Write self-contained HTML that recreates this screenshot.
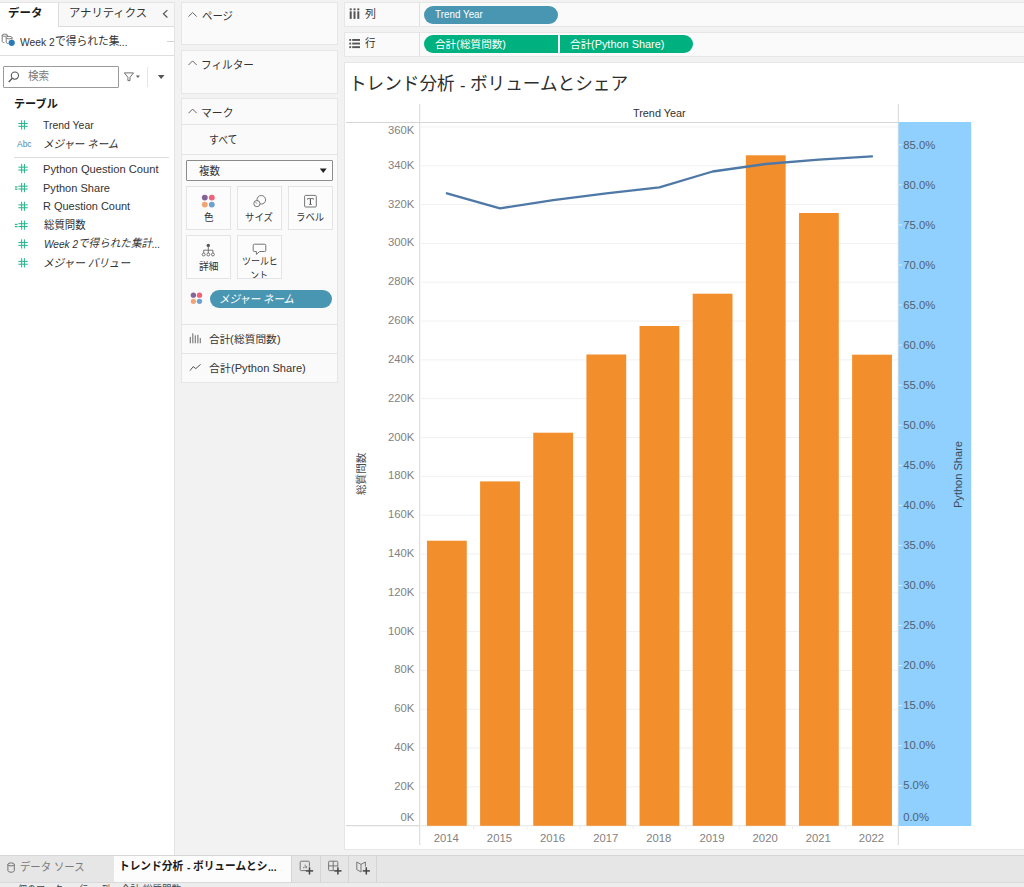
<!DOCTYPE html>
<html lang="ja"><head><meta charset="utf-8"><title>Tableau - トレンド分析</title>
<style>
html,body{margin:0;padding:0;}
body{width:1024px;height:887px;overflow:hidden;position:relative;background:#f2f2f2;font-family:"Liberation Sans","Noto Sans CJK JP",sans-serif;}
.a{position:absolute;}
.t{position:absolute;white-space:pre;}
</style></head><body>
<div class="a" style="left:0px;top:3px;width:174px;height:852px;background:#ffffff;"></div>
<div class="a" style="left:0px;top:2px;width:175px;height:1px;background:#e4e4e4;"></div>
<div class="a" style="left:174px;top:2px;width:1px;height:853px;background:#e4e4e4;"></div>
<div class="a" style="left:59px;top:3px;width:115px;height:23px;background:#f8f8f8;"></div>
<div class="a" style="left:58px;top:3px;width:1px;height:24px;background:#dcdcdc;"></div>
<div class="a" style="left:58px;top:26px;width:116px;height:1px;background:#dcdcdc;"></div>
<div class="a" style="left:0px;top:55px;width:174px;height:1px;background:#dedede;"></div>
<div class="a" style="left:166.5px;top:41px;width:7.5px;height:1px;background:#d0d0d0;"></div>
<div class="a" style="left:3px;top:66px;width:116px;height:22px;background:#fff;border:1px solid #9a9a9a;box-sizing:border-box;border-radius:1px;"></div>
<div class="a" style="left:147px;top:67px;width:1px;height:20px;background:#e6e6e6;"></div>
<div class="a" style="left:14px;top:157px;width:155px;height:1px;background:#dddddd;"></div>
<div class="a" style="left:181px;top:2px;width:157px;height:43px;background:#fafafa;border:1px solid #e6e6e6;box-sizing:border-box;"></div>
<div class="a" style="left:181px;top:50px;width:157px;height:44px;background:#fafafa;border:1px solid #e6e6e6;box-sizing:border-box;"></div>
<div class="a" style="left:181px;top:98px;width:157px;height:285px;background:#fafafa;border:1px solid #e6e6e6;box-sizing:border-box;"></div>
<div class="a" style="left:182px;top:124px;width:155px;height:1px;background:#e4e4e4;"></div>
<div class="a" style="left:182px;top:154px;width:155px;height:1px;background:#e4e4e4;"></div>
<div class="a" style="left:182px;top:324px;width:155px;height:1px;background:#e4e4e4;"></div>
<div class="a" style="left:182px;top:353px;width:155px;height:1px;background:#e4e4e4;"></div>
<div class="a" style="left:186px;top:160px;width:147px;height:21px;background:#fcfcfc;border:1px solid #8c8c8c;box-sizing:border-box;border-radius:1px;"></div>
<div class="a" style="left:186px;top:186px;width:44.5px;height:44px;background:#fcfcfc;border:1px solid #e4e4e4;box-sizing:border-box;"></div>
<div class="a" style="left:237px;top:186px;width:44.5px;height:44px;background:#fcfcfc;border:1px solid #e4e4e4;box-sizing:border-box;"></div>
<div class="a" style="left:288px;top:186px;width:44.5px;height:44px;background:#fcfcfc;border:1px solid #e4e4e4;box-sizing:border-box;"></div>
<div class="a" style="left:186px;top:235px;width:44.5px;height:44px;background:#fcfcfc;border:1px solid #e4e4e4;box-sizing:border-box;"></div>
<div class="a" style="left:237px;top:235px;width:44.5px;height:44px;background:#fcfcfc;border:1px solid #e4e4e4;box-sizing:border-box;"></div>
<div class="a" style="left:210px;top:290px;width:122px;height:17.5px;background:#4996b2;border-radius:9px;"></div>
<div class="a" style="left:344px;top:2px;width:700px;height:25px;background:#fafafa;border:1px solid #e6e6e6;box-sizing:border-box;"></div>
<div class="a" style="left:344px;top:32px;width:700px;height:25px;background:#fafafa;border:1px solid #e6e6e6;box-sizing:border-box;"></div>
<div class="a" style="left:419px;top:3px;width:1px;height:23px;background:#e0e0e0;"></div>
<div class="a" style="left:419px;top:33px;width:1px;height:23px;background:#e0e0e0;"></div>
<div class="a" style="left:424px;top:5.5px;width:134px;height:18px;background:#4996b2;border-radius:9px;"></div>
<div class="a" style="left:424px;top:35.2px;width:133.7px;height:18px;background:#00b180;border-radius:9px 0 0 9px;"></div>
<div class="a" style="left:560px;top:35.2px;width:133px;height:18px;background:#00b180;border-radius:0 9px 9px 0;"></div>
<div class="a" style="left:344px;top:62px;width:700px;height:788px;background:#fff;border:1px solid #e6e6e6;box-sizing:border-box;"></div>
<div class="a" style="left:0px;top:855px;width:1024px;height:28px;background:#e6e6e6;"></div>
<div class="a" style="left:0px;top:854.6px;width:1024px;height:1px;background:#d6d6d6;"></div>
<div class="a" style="left:113.5px;top:855.6px;width:177.5px;height:26.6px;background:#fcfcfc;"></div>
<div class="a" style="left:291px;top:856px;width:1px;height:26px;background:#d4d4d4;"></div>
<div class="a" style="left:319.6px;top:856px;width:1px;height:26px;background:#d4d4d4;"></div>
<div class="a" style="left:348px;top:856px;width:1px;height:26px;background:#d4d4d4;"></div>
<div class="a" style="left:376.3px;top:856px;width:1px;height:26px;background:#d4d4d4;"></div>
<div class="a" style="left:0px;top:882px;width:1024px;height:1px;background:#d9d9d9;"></div>
<div class="a" style="left:0px;top:883px;width:1024px;height:4px;background:#ededed;"></div>
<svg class="a" style="left:0;top:0" width="1024" height="887"><rect x="421.0" y="825.20" width="477.3" height="1" fill="#e6e6e6"/><rect x="421.0" y="786.38" width="477.3" height="1" fill="#f1f1f1"/><rect x="421.0" y="747.56" width="477.3" height="1" fill="#f1f1f1"/><rect x="421.0" y="708.74" width="477.3" height="1" fill="#f1f1f1"/><rect x="421.0" y="669.92" width="477.3" height="1" fill="#f1f1f1"/><rect x="421.0" y="631.10" width="477.3" height="1" fill="#f1f1f1"/><rect x="421.0" y="592.28" width="477.3" height="1" fill="#f1f1f1"/><rect x="421.0" y="553.46" width="477.3" height="1" fill="#f1f1f1"/><rect x="421.0" y="514.64" width="477.3" height="1" fill="#f1f1f1"/><rect x="421.0" y="475.82" width="477.3" height="1" fill="#f1f1f1"/><rect x="421.0" y="437.00" width="477.3" height="1" fill="#f1f1f1"/><rect x="421.0" y="398.18" width="477.3" height="1" fill="#f1f1f1"/><rect x="421.0" y="359.36" width="477.3" height="1" fill="#f1f1f1"/><rect x="421.0" y="320.54" width="477.3" height="1" fill="#f1f1f1"/><rect x="421.0" y="281.72" width="477.3" height="1" fill="#f1f1f1"/><rect x="421.0" y="242.90" width="477.3" height="1" fill="#f1f1f1"/><rect x="421.0" y="204.08" width="477.3" height="1" fill="#f1f1f1"/><rect x="421.0" y="165.26" width="477.3" height="1" fill="#f1f1f1"/><rect x="421.0" y="126.44" width="477.3" height="1" fill="#f1f1f1"/><rect x="346" y="122" width="552.3" height="1" fill="#d6d6d6"/><rect x="419.2" y="104" width="1" height="741" fill="#d6d6d6"/><rect x="346" y="825.2" width="74.0" height="1" fill="#d2d2d2"/><rect x="897.8" y="104" width="1" height="741" fill="#d6d6d6"/><rect x="898.5999999999999" y="122" width="72.6" height="704.0" fill="#90d0fe"/><rect x="426.97" y="540.7" width="39.8" height="285.1" fill="#f28e2b"/><rect x="480.12" y="481.4" width="39.8" height="344.4" fill="#f28e2b"/><rect x="533.26" y="432.7" width="39.8" height="393.1" fill="#f28e2b"/><rect x="586.41" y="354.5" width="39.8" height="471.3" fill="#f28e2b"/><rect x="639.55" y="326.0" width="39.8" height="499.8" fill="#f28e2b"/><rect x="692.69" y="293.7" width="39.8" height="532.1" fill="#f28e2b"/><rect x="745.84" y="155.3" width="39.8" height="670.5" fill="#f28e2b"/><rect x="798.98" y="213.0" width="39.8" height="612.8" fill="#f28e2b"/><rect x="852.13" y="354.7" width="39.8" height="471.1" fill="#f28e2b"/><rect x="473.1" y="826.2" width="1" height="3" fill="#ececec"/><rect x="526.3" y="826.2" width="1" height="3" fill="#ececec"/><rect x="579.4" y="826.2" width="1" height="3" fill="#ececec"/><rect x="632.6" y="826.2" width="1" height="3" fill="#ececec"/><rect x="685.7" y="826.2" width="1" height="3" fill="#ececec"/><rect x="738.9" y="826.2" width="1" height="3" fill="#ececec"/><rect x="792.0" y="826.2" width="1" height="3" fill="#ececec"/><rect x="845.2" y="826.2" width="1" height="3" fill="#ececec"/><rect x="898.8" y="785.15" width="3.4" height="1" fill="#d2ebfc"/><rect x="898.8" y="745.10" width="3.4" height="1" fill="#d2ebfc"/><rect x="898.8" y="705.05" width="3.4" height="1" fill="#d2ebfc"/><rect x="898.8" y="665.00" width="3.4" height="1" fill="#d2ebfc"/><rect x="898.8" y="624.95" width="3.4" height="1" fill="#d2ebfc"/><rect x="898.8" y="584.90" width="3.4" height="1" fill="#d2ebfc"/><rect x="898.8" y="544.85" width="3.4" height="1" fill="#d2ebfc"/><rect x="898.8" y="504.80" width="3.4" height="1" fill="#d2ebfc"/><rect x="898.8" y="464.75" width="3.4" height="1" fill="#d2ebfc"/><rect x="898.8" y="424.70" width="3.4" height="1" fill="#d2ebfc"/><rect x="898.8" y="384.65" width="3.4" height="1" fill="#d2ebfc"/><rect x="898.8" y="344.60" width="3.4" height="1" fill="#d2ebfc"/><rect x="898.8" y="304.55" width="3.4" height="1" fill="#d2ebfc"/><rect x="898.8" y="264.50" width="3.4" height="1" fill="#d2ebfc"/><rect x="898.8" y="224.45" width="3.4" height="1" fill="#d2ebfc"/><rect x="898.8" y="184.40" width="3.4" height="1" fill="#d2ebfc"/><rect x="898.8" y="144.35" width="3.4" height="1" fill="#d2ebfc"/><polyline points="446.9,193.3 500.0,208.3 553.2,200.2 606.3,193.3 659.4,187.3 712.6,171.5 765.7,164.0 818.9,159.7 872.0,156.4" fill="none" stroke="#4e79a7" stroke-width="2.3" stroke-linejoin="round" stroke-linecap="round"/></svg>
<div class="a" style="left:400.00px;top:821.00px;"><span class="t" style="left:0.48px;top:-9.00px;font-size:11.3px;line-height:11.3px;color:#828282;">0K</span></div>
<div class="a" style="left:394.00px;top:790.00px;"><span class="t" style="left:0.19px;top:-9.00px;font-size:11.3px;line-height:11.3px;color:#828282;">20K</span></div>
<div class="a" style="left:394.00px;top:751.00px;"><span class="t" style="left:0.19px;top:-9.00px;font-size:11.3px;line-height:11.3px;color:#828282;">40K</span></div>
<div class="a" style="left:394.00px;top:712.00px;"><span class="t" style="left:0.19px;top:-9.00px;font-size:11.3px;line-height:11.3px;color:#828282;">60K</span></div>
<div class="a" style="left:394.00px;top:673.00px;"><span class="t" style="left:0.19px;top:-9.00px;font-size:11.3px;line-height:11.3px;color:#828282;">80K</span></div>
<div class="a" style="left:387.00px;top:635.00px;"><span class="t" style="left:0.91px;top:-9.00px;font-size:11.3px;line-height:11.3px;color:#828282;">100K</span></div>
<div class="a" style="left:387.00px;top:596.00px;"><span class="t" style="left:0.91px;top:-9.00px;font-size:11.3px;line-height:11.3px;color:#828282;">120K</span></div>
<div class="a" style="left:387.00px;top:557.00px;"><span class="t" style="left:0.91px;top:-9.00px;font-size:11.3px;line-height:11.3px;color:#828282;">140K</span></div>
<div class="a" style="left:387.00px;top:518.00px;"><span class="t" style="left:0.91px;top:-9.00px;font-size:11.3px;line-height:11.3px;color:#828282;">160K</span></div>
<div class="a" style="left:387.00px;top:479.00px;"><span class="t" style="left:0.91px;top:-9.00px;font-size:11.3px;line-height:11.3px;color:#828282;">180K</span></div>
<div class="a" style="left:387.00px;top:441.00px;"><span class="t" style="left:0.91px;top:-9.00px;font-size:11.3px;line-height:11.3px;color:#828282;">200K</span></div>
<div class="a" style="left:387.00px;top:402.00px;"><span class="t" style="left:0.91px;top:-9.00px;font-size:11.3px;line-height:11.3px;color:#828282;">220K</span></div>
<div class="a" style="left:387.00px;top:363.00px;"><span class="t" style="left:0.91px;top:-9.00px;font-size:11.3px;line-height:11.3px;color:#828282;">240K</span></div>
<div class="a" style="left:387.00px;top:324.00px;"><span class="t" style="left:0.91px;top:-9.00px;font-size:11.3px;line-height:11.3px;color:#828282;">260K</span></div>
<div class="a" style="left:387.00px;top:285.00px;"><span class="t" style="left:0.91px;top:-9.00px;font-size:11.3px;line-height:11.3px;color:#828282;">280K</span></div>
<div class="a" style="left:387.00px;top:246.00px;"><span class="t" style="left:0.91px;top:-9.00px;font-size:11.3px;line-height:11.3px;color:#828282;">300K</span></div>
<div class="a" style="left:387.00px;top:208.00px;"><span class="t" style="left:0.91px;top:-9.00px;font-size:11.3px;line-height:11.3px;color:#828282;">320K</span></div>
<div class="a" style="left:387.00px;top:169.00px;"><span class="t" style="left:0.91px;top:-9.00px;font-size:11.3px;line-height:11.3px;color:#828282;">340K</span></div>
<div class="a" style="left:387.00px;top:134.00px;"><span class="t" style="left:0.91px;top:-9.00px;font-size:11.3px;line-height:11.3px;color:#828282;">360K</span></div>
<div class="a" style="left:903.00px;top:821.00px;"><span class="t" style="left:0.20px;top:-9.00px;font-size:11.3px;line-height:11.3px;color:#4f5f70;">0.0%</span></div>
<div class="a" style="left:903.00px;top:789.00px;"><span class="t" style="left:0.20px;top:-9.00px;font-size:11.3px;line-height:11.3px;color:#4f5f70;">5.0%</span></div>
<div class="a" style="left:903.00px;top:749.00px;"><span class="t" style="left:0.20px;top:-9.00px;font-size:11.3px;line-height:11.3px;color:#4f5f70;">10.0%</span></div>
<div class="a" style="left:903.00px;top:709.00px;"><span class="t" style="left:0.20px;top:-9.00px;font-size:11.3px;line-height:11.3px;color:#4f5f70;">15.0%</span></div>
<div class="a" style="left:903.00px;top:669.00px;"><span class="t" style="left:0.20px;top:-9.00px;font-size:11.3px;line-height:11.3px;color:#4f5f70;">20.0%</span></div>
<div class="a" style="left:903.00px;top:629.00px;"><span class="t" style="left:0.20px;top:-9.00px;font-size:11.3px;line-height:11.3px;color:#4f5f70;">25.0%</span></div>
<div class="a" style="left:903.00px;top:589.00px;"><span class="t" style="left:0.20px;top:-9.00px;font-size:11.3px;line-height:11.3px;color:#4f5f70;">30.0%</span></div>
<div class="a" style="left:903.00px;top:549.00px;"><span class="t" style="left:0.20px;top:-9.00px;font-size:11.3px;line-height:11.3px;color:#4f5f70;">35.0%</span></div>
<div class="a" style="left:903.00px;top:509.00px;"><span class="t" style="left:0.20px;top:-9.00px;font-size:11.3px;line-height:11.3px;color:#4f5f70;">40.0%</span></div>
<div class="a" style="left:903.00px;top:469.00px;"><span class="t" style="left:0.20px;top:-9.00px;font-size:11.3px;line-height:11.3px;color:#4f5f70;">45.0%</span></div>
<div class="a" style="left:903.00px;top:429.00px;"><span class="t" style="left:0.20px;top:-9.00px;font-size:11.3px;line-height:11.3px;color:#4f5f70;">50.0%</span></div>
<div class="a" style="left:903.00px;top:389.00px;"><span class="t" style="left:0.20px;top:-9.00px;font-size:11.3px;line-height:11.3px;color:#4f5f70;">55.0%</span></div>
<div class="a" style="left:903.00px;top:349.00px;"><span class="t" style="left:0.20px;top:-9.00px;font-size:11.3px;line-height:11.3px;color:#4f5f70;">60.0%</span></div>
<div class="a" style="left:903.00px;top:309.00px;"><span class="t" style="left:0.20px;top:-9.00px;font-size:11.3px;line-height:11.3px;color:#4f5f70;">65.0%</span></div>
<div class="a" style="left:903.00px;top:269.00px;"><span class="t" style="left:0.20px;top:-9.00px;font-size:11.3px;line-height:11.3px;color:#4f5f70;">70.0%</span></div>
<div class="a" style="left:903.00px;top:229.00px;"><span class="t" style="left:0.20px;top:-9.00px;font-size:11.3px;line-height:11.3px;color:#4f5f70;">75.0%</span></div>
<div class="a" style="left:903.00px;top:189.00px;"><span class="t" style="left:0.20px;top:-9.00px;font-size:11.3px;line-height:11.3px;color:#4f5f70;">80.0%</span></div>
<div class="a" style="left:903.00px;top:149.00px;"><span class="t" style="left:0.20px;top:-9.00px;font-size:11.3px;line-height:11.3px;color:#4f5f70;">85.0%</span></div>
<div class="a" style="left:433.00px;top:842.00px;"><span class="t" style="left:0.70px;top:-9.00px;font-size:11.3px;line-height:11.3px;color:#828282;">2014</span></div>
<div class="a" style="left:486.00px;top:842.00px;"><span class="t" style="left:0.85px;top:-9.00px;font-size:11.3px;line-height:11.3px;color:#828282;">2015</span></div>
<div class="a" style="left:539.00px;top:842.00px;"><span class="t" style="left:0.99px;top:-9.00px;font-size:11.3px;line-height:11.3px;color:#828282;">2016</span></div>
<div class="a" style="left:593.00px;top:842.00px;"><span class="t" style="left:0.14px;top:-9.00px;font-size:11.3px;line-height:11.3px;color:#828282;">2017</span></div>
<div class="a" style="left:646.00px;top:842.00px;"><span class="t" style="left:0.28px;top:-9.00px;font-size:11.3px;line-height:11.3px;color:#828282;">2018</span></div>
<div class="a" style="left:699.00px;top:842.00px;"><span class="t" style="left:0.42px;top:-9.00px;font-size:11.3px;line-height:11.3px;color:#828282;">2019</span></div>
<div class="a" style="left:752.00px;top:842.00px;"><span class="t" style="left:0.57px;top:-9.00px;font-size:11.3px;line-height:11.3px;color:#828282;">2020</span></div>
<div class="a" style="left:805.00px;top:842.00px;"><span class="t" style="left:0.71px;top:-9.00px;font-size:11.3px;line-height:11.3px;color:#828282;">2021</span></div>
<div class="a" style="left:858.00px;top:842.00px;"><span class="t" style="left:0.86px;top:-9.00px;font-size:11.3px;line-height:11.3px;color:#828282;">2022</span></div>
<div class="a" style="left:632.00px;top:117.00px;"><span class="t" style="left:0.95px;top:-9.00px;font-size:11.3px;line-height:11.3px;color:#333;transform:scaleX(0.9605);transform-origin:0 0;">Trend Year</span></div>
<div class="a" style="left:962.50px;top:508.00px;transform:rotate(-90deg);transform-origin:0 0;"><span class="t" style="left:0.00px;top:-9.57px;font-size:11.3px;line-height:11.3px;color:#3c4a58;transform:scaleX(0.9785);transform-origin:0 0;">Python Share</span></div>
<svg class="a" style="left:0;top:0" width="1024" height="887"><polyline points="167.4,10.1 163.4,13.8 167.4,17.5" fill="none" stroke="#555" stroke-width="1.2"/><ellipse cx="4.8" cy="35.2" rx="2.6" ry="1.1" fill="none" stroke="#6c6c6c" stroke-width="0.9"/><path d="M2.2 35.2V41.4C2.2 42.2 3.2 42.6 4.4 42.6M7.4 35.2V36.4" fill="none" stroke="#6c6c6c" stroke-width="0.9"/><ellipse cx="9.1" cy="37.6" rx="2.9" ry="1.25" fill="#fff" stroke="#6c6c6c" stroke-width="0.9"/><path d="M6.2 37.6V42.2C6.2 43.1 7.3 43.6 8.6 43.6M12 37.6V39.6" fill="none" stroke="#6c6c6c" stroke-width="0.9"/><circle cx="11.7" cy="42.8" r="3.1" fill="#2a7ab5"/><circle cx="14.9" cy="75.6" r="3.6" fill="none" stroke="#555" stroke-width="1.1"/><line x1="12.3" y1="78.3" x2="8.7" y2="82" stroke="#555" stroke-width="1.3"/><path d="M124.3 72.9H133.5L130 77.3V80.6H127.9V77.3Z" fill="none" stroke="#707070" stroke-width="1" stroke-linejoin="round"/><path d="M135.8 75.4H140L137.9 78Z" fill="#666"/><path d="M157.8 75H164.5L161.15 79.1Z" fill="#555"/><rect x="21.1" y="120.30" width="1.05" height="9.2" fill="#2bb78f"/><rect x="23.9" y="120.30" width="1.05" height="9.2" fill="#2bb78f"/><rect x="18.4" y="122.95" width="9.3" height="1.05" fill="#2bb78f"/><rect x="18.4" y="125.80" width="9.3" height="1.05" fill="#2bb78f"/><rect x="21.1" y="164.00" width="1.05" height="9.2" fill="#2bb78f"/><rect x="23.9" y="164.00" width="1.05" height="9.2" fill="#2bb78f"/><rect x="18.4" y="166.65" width="9.3" height="1.05" fill="#2bb78f"/><rect x="18.4" y="169.50" width="9.3" height="1.05" fill="#2bb78f"/><rect x="21.1" y="183.00" width="1.05" height="9.2" fill="#2bb78f"/><rect x="23.9" y="183.00" width="1.05" height="9.2" fill="#2bb78f"/><rect x="18.4" y="185.65" width="9.3" height="1.05" fill="#2bb78f"/><rect x="18.4" y="188.50" width="9.3" height="1.05" fill="#2bb78f"/><rect x="14.9" y="186.30" width="2.6" height="1.25" fill="#2bb78f"/><rect x="14.9" y="188.50" width="2.6" height="1.25" fill="#2bb78f"/><rect x="21.1" y="201.70" width="1.05" height="9.2" fill="#2bb78f"/><rect x="23.9" y="201.70" width="1.05" height="9.2" fill="#2bb78f"/><rect x="18.4" y="204.35" width="9.3" height="1.05" fill="#2bb78f"/><rect x="18.4" y="207.20" width="9.3" height="1.05" fill="#2bb78f"/><rect x="21.1" y="220.50" width="1.05" height="9.2" fill="#2bb78f"/><rect x="23.9" y="220.50" width="1.05" height="9.2" fill="#2bb78f"/><rect x="18.4" y="223.15" width="9.3" height="1.05" fill="#2bb78f"/><rect x="18.4" y="226.00" width="9.3" height="1.05" fill="#2bb78f"/><rect x="14.9" y="223.80" width="2.6" height="1.25" fill="#2bb78f"/><rect x="14.9" y="226.00" width="2.6" height="1.25" fill="#2bb78f"/><rect x="21.1" y="239.30" width="1.05" height="9.2" fill="#2bb78f"/><rect x="23.9" y="239.30" width="1.05" height="9.2" fill="#2bb78f"/><rect x="18.4" y="241.95" width="9.3" height="1.05" fill="#2bb78f"/><rect x="18.4" y="244.80" width="9.3" height="1.05" fill="#2bb78f"/><rect x="21.1" y="258.20" width="1.05" height="9.2" fill="#2bb78f"/><rect x="23.9" y="258.20" width="1.05" height="9.2" fill="#2bb78f"/><rect x="18.4" y="260.85" width="9.3" height="1.05" fill="#2bb78f"/><rect x="18.4" y="263.70" width="9.3" height="1.05" fill="#2bb78f"/><polyline points="188.5,16.6 192.6,12.5 196.7,16.6" fill="none" stroke="#666" stroke-width="1.0"/><polyline points="188.5,65.0 192.6,60.9 196.7,65.0" fill="none" stroke="#666" stroke-width="1.0"/><polyline points="188.5,113.19999999999999 192.6,109.1 196.7,113.19999999999999" fill="none" stroke="#666" stroke-width="1.0"/><path d="M319.8 168.4H326.7L323.25 172.9Z" fill="#222"/><circle cx="204.8" cy="197.6" r="2.95" fill="#82649b"/><circle cx="211.8" cy="197.6" r="2.95" fill="#f0647a"/><circle cx="204.8" cy="204.6" r="2.95" fill="#f1a573"/><circle cx="211.8" cy="204.6" r="2.95" fill="#6fa1ce"/><circle cx="261.3" cy="199.8" r="4.3" fill="none" stroke="#666" stroke-width="0.9"/><circle cx="256.9" cy="203.6" r="3.1" fill="#fcfcfc" stroke="#666" stroke-width="0.9"/><path d="M256.9 203.6L255.6 202.2" fill="none" stroke="#666" stroke-width="0.9"/><rect x="304.6" y="195.4" width="11.7" height="11.6" rx="1" fill="none" stroke="#666" stroke-width="0.9"/><path d="M307.3 198.2H313.6V199.7H313.1C313 199.1 312.8 198.9 312.2 198.9H311V203.6C311 204 311.2 204.1 311.9 204.2V204.7H309V204.2C309.7 204.1 309.9 204 309.9 203.6V198.9H308.7C308.1 198.9 307.9 199.1 307.8 199.7H307.3Z" fill="#555"/><circle cx="208.3" cy="245.4" r="1.7" fill="#555"/><path d="M208.3 247V253M203.7 253V250.2H212.9V253" fill="none" stroke="#666" stroke-width="0.9"/><circle cx="203.7" cy="254.5" r="1.45" fill="none" stroke="#666" stroke-width="0.9"/><circle cx="208.3" cy="254.5" r="1.45" fill="none" stroke="#666" stroke-width="0.9"/><circle cx="212.9" cy="254.5" r="1.45" fill="none" stroke="#666" stroke-width="0.9"/><path d="M254.3 244.2H264.7Q265.8 244.2 265.8 245.3V250.4Q265.8 251.5 264.7 251.5H259.6L256.4 254.4V251.5H254.3Q253.2 251.5 253.2 250.4V245.3Q253.2 244.2 254.3 244.2Z" fill="none" stroke="#666" stroke-width="0.9"/><circle cx="193.4" cy="295.2" r="2.65" fill="#82649b"/><circle cx="199.5" cy="295.2" r="2.65" fill="#f0647a"/><circle cx="193.4" cy="301.3" r="2.65" fill="#f1a573"/><circle cx="199.5" cy="301.3" r="2.65" fill="#6fa1ce"/><rect x="189.70" y="336.90" width="1.2" height="6.4" fill="#808080"/><rect x="192.20" y="333.30" width="1.2" height="10" fill="#808080"/><rect x="194.70" y="335.30" width="1.2" height="8" fill="#808080"/><rect x="197.25" y="334.80" width="1.2" height="8.5" fill="#808080"/><rect x="199.70" y="338.00" width="1.2" height="5.3" fill="#808080"/><polyline points="190,370.6 193.2,366.6 195.8,368.6 200.6,364.4" fill="none" stroke="#555" stroke-width="1"/><rect x="349.7" y="11.3" width="2.0" height="7.6" fill="#555"/><rect x="349.7" y="8.4" width="2.0" height="1.9" fill="#555"/><rect x="353.5" y="11.3" width="2.0" height="7.6" fill="#555"/><rect x="353.5" y="8.4" width="2.0" height="1.9" fill="#555"/><rect x="357.3" y="11.3" width="2.0" height="7.6" fill="#555"/><rect x="357.3" y="8.4" width="2.0" height="1.9" fill="#555"/><rect x="352.2" y="39.0" width="7.8" height="1.9" fill="#555"/><rect x="349.3" y="39.0" width="1.8" height="1.9" fill="#555"/><rect x="352.2" y="42.6" width="7.8" height="1.9" fill="#555"/><rect x="349.3" y="42.6" width="1.8" height="1.9" fill="#555"/><rect x="352.2" y="46.2" width="7.8" height="1.9" fill="#555"/><rect x="349.3" y="46.2" width="1.8" height="1.9" fill="#555"/><ellipse cx="11.1" cy="864.4" rx="3.2" ry="1.5" fill="none" stroke="#6a6a6a" stroke-width="0.95"/><path d="M7.9 864.4V870.6C7.9 871.5 9.3 872.2 11.1 872.2S14.3 871.5 14.3 870.6V864.4" fill="none" stroke="#6a6a6a" stroke-width="0.95"/><path d="M306 870.6H301.2Q300.2 870.6 300.2 869.6V862.2Q300.2 861.2 301.2 861.2H308.4Q309.4 861.2 309.4 862.2V866.6" fill="none" stroke="#707070" stroke-width="0.95"/><rect x="303.2" y="867" width="0.9" height="1.2" fill="#777"/><rect x="304.7" y="864.6" width="0.9" height="3.6" fill="#777"/><rect x="306.2" y="866" width="0.9" height="2.2" fill="#777"/><rect x="305.9" y="870.15" width="7.2" height="1.5" fill="#444"/><rect x="308.75" y="867.3" width="1.5" height="7.2" fill="#444"/><path d="M334.4 870.6H329.6Q328.6 870.6 328.6 869.6V862.2Q328.6 861.2 329.6 861.2H336.8Q337.8 861.2 337.8 862.2V866.6M328.6 865.9H337.8M333.2 861.2V870.6" fill="none" stroke="#707070" stroke-width="0.95"/><rect x="334.29999999999995" y="870.15" width="7.2" height="1.5" fill="#444"/><rect x="337.15" y="867.3" width="1.5" height="7.2" fill="#444"/><path d="M361 872L356.8 869.6V862L361 864.4M361 872V864.4L365.4 862V866.6" fill="none" stroke="#707070" stroke-width="0.95"/><rect x="362.7" y="870.15" width="7.2" height="1.5" fill="#444"/><rect x="365.55" y="867.3" width="1.5" height="7.2" fill="#444"/></svg>
<div class="a" style="left:8.00px;top:18.00px;"><span class="t" style="left:0.37px;top:-9.60px;font-size:11.3px;line-height:11.3px;color:#1a1a1a;font-weight:bold;transform:scaleX(1.014);transform-origin:0 0;">データ</span></div>
<div class="a" style="left:69.00px;top:18.00px;"><span class="t" style="left:0.20px;top:-9.60px;font-size:11.3px;line-height:11.3px;color:#333333;transform:scaleX(1.002);transform-origin:0 0;">アナリティクス</span></div>
<div class="a" style="left:20.00px;top:46.00px;"><span class="t" style="left:0.10px;top:-9.00px;font-size:10.8px;line-height:10.8px;color:#333333;transform:scaleX(0.9511);transform-origin:0 0;">Week 2</span><span class="t" style="left:34.74px;top:-9.60px;font-size:11.3px;line-height:11.3px;color:#333333;transform:scaleX(0.951);transform-origin:0 0;">で得られた集</span><span class="t" style="left:99.22px;top:-9.00px;font-size:10.8px;line-height:10.8px;color:#333333;transform:scaleX(0.9511);transform-origin:0 0;">...</span></div>
<div class="a" style="left:27.00px;top:81.00px;"><span class="t" style="left:0.98px;top:-9.60px;font-size:11.3px;line-height:11.3px;color:#7a7a7a;transform:scaleX(0.935);transform-origin:0 0;">検索</span></div>
<div class="a" style="left:13.00px;top:108.00px;"><span class="t" style="left:0.95px;top:-9.30px;font-size:11.3px;line-height:11.3px;color:#1a1a1a;font-weight:bold;transform:scaleX(0.984);transform-origin:0 0;">テーブル</span></div>
<div class="a" style="left:43.00px;top:129.00px;"><span class="t" style="left:0.30px;top:-9.00px;font-size:10.8px;line-height:10.8px;color:#333333;transform:scaleX(0.9669);transform-origin:0 0;">Trend Year</span></div>
<div class="a" style="left:43.00px;top:149.00px;"><span class="t" style="left:0.11px;top:-9.80px;font-size:11.3px;line-height:11.3px;color:#333333;font-style:italic;transform:scaleX(0.925);transform-origin:0 0;">メジャー ネーム</span></div>
<div class="a" style="left:43.00px;top:173.00px;"><span class="t" style="left:0.20px;top:-9.00px;font-size:10.8px;line-height:10.8px;color:#333333;transform:scaleX(1.0352);transform-origin:0 0;">Python Question Count</span></div>
<div class="a" style="left:43.00px;top:192.00px;"><span class="t" style="left:0.20px;top:-9.00px;font-size:10.8px;line-height:10.8px;color:#333333;transform:scaleX(1.0237);transform-origin:0 0;">Python Share</span></div>
<div class="a" style="left:43.00px;top:210.00px;"><span class="t" style="left:0.20px;top:-9.00px;font-size:10.8px;line-height:10.8px;color:#333333;transform:scaleX(1.0156);transform-origin:0 0;">R Question Count</span></div>
<div class="a" style="left:43.00px;top:229.00px;"><span class="t" style="left:0.63px;top:-9.30px;font-size:11.3px;line-height:11.3px;color:#333333;transform:scaleX(0.922);transform-origin:0 0;">総質問数</span></div>
<div class="a" style="left:43.00px;top:248.00px;"><span class="t" style="left:0.90px;top:-9.00px;font-size:10.8px;line-height:10.8px;color:#333333;font-style:italic;transform:scaleX(0.9371);transform-origin:0 0;">Week 2</span><span class="t" style="left:35.03px;top:-9.60px;font-size:11.3px;line-height:11.3px;color:#333333;font-style:italic;transform:scaleX(0.937);transform-origin:0 0;">で得られた集計</span><span class="t" style="left:109.15px;top:-9.00px;font-size:10.8px;line-height:10.8px;color:#333333;font-style:italic;transform:scaleX(0.9371);transform-origin:0 0;">...</span></div>
<div class="a" style="left:43.00px;top:267.00px;"><span class="t" style="left:0.09px;top:-9.30px;font-size:11.3px;line-height:11.3px;color:#333333;font-style:italic;transform:scaleX(0.936);transform-origin:0 0;">メジャー バリュー</span></div>
<div class="a" style="left:16.00px;top:147.00px;"><span class="t" style="left:0.60px;top:-7.00px;font-size:8.6px;line-height:8.6px;color:#4b8eb3;transform:scaleX(0.9852);transform-origin:0 0;">Abc</span></div>
<div class="a" style="left:201.00px;top:20.00px;"><span class="t" style="left:0.65px;top:-9.50px;font-size:11.3px;line-height:11.3px;color:#333333;transform:scaleX(0.919);transform-origin:0 0;">ページ</span></div>
<div class="a" style="left:201.00px;top:69.00px;"><span class="t" style="left:0.16px;top:-9.30px;font-size:11.3px;line-height:11.3px;color:#333333;transform:scaleX(0.942);transform-origin:0 0;">フィルター</span></div>
<div class="a" style="left:201.00px;top:117.00px;"><span class="t" style="left:0.48px;top:-9.10px;font-size:11.3px;line-height:11.3px;color:#333333;transform:scaleX(0.958);transform-origin:0 0;">マーク</span></div>
<div class="a" style="left:209.00px;top:145.00px;"><span class="t" style="left:0.16px;top:-9.80px;font-size:11.3px;line-height:11.3px;color:#333333;transform:scaleX(0.870);transform-origin:0 0;">すべて</span></div>
<div class="a" style="left:198.00px;top:175.00px;"><span class="t" style="left:0.90px;top:-9.40px;font-size:11.3px;line-height:11.3px;color:#333;transform:scaleX(0.930);transform-origin:0 0;">複数</span></div>
<div class="a" style="left:203.00px;top:222.00px;"><span class="t" style="left:0.87px;top:-8.85px;font-size:10.2px;line-height:10.2px;color:#333333;transform:scaleX(0.936);transform-origin:0 0;">色</span></div>
<div class="a" style="left:245.00px;top:222.00px;"><span class="t" style="left:0.07px;top:-8.85px;font-size:10.2px;line-height:10.2px;color:#333333;transform:scaleX(0.921);transform-origin:0 0;">サイズ</span></div>
<div class="a" style="left:295.00px;top:222.00px;"><span class="t" style="left:0.87px;top:-8.85px;font-size:10.2px;line-height:10.2px;color:#333333;transform:scaleX(0.925);transform-origin:0 0;">ラベル</span></div>
<div class="a" style="left:198.00px;top:271.00px;"><span class="t" style="left:0.83px;top:-8.85px;font-size:10.4px;line-height:10.4px;color:#333333;transform:scaleX(0.936);transform-origin:0 0;">詳細</span></div>
<div class="a" style="left:241.00px;top:265.00px;"><span class="t" style="left:0.52px;top:-8.05px;font-size:9.94px;line-height:9.94px;color:#333333;transform:scaleX(0.901);transform-origin:0 0;">ツールヒ</span></div>
<div class="a" style="left:238px;top:236.5px;width:42.5px;height:41.5px;overflow:hidden"><div class="a" style="left:-238px;top:-236.5px"><div class="a" style="left:250.00px;top:279.00px;"><span class="t" style="left:0.34px;top:-8.25px;font-size:9.94px;line-height:9.94px;color:#333333;transform:scaleX(0.902);transform-origin:0 0;">ント</span></div></div></div>
<div class="a" style="left:219.00px;top:303.00px;"><span class="t" style="left:0.11px;top:-9.30px;font-size:11.3px;line-height:11.3px;color:#ffffff;font-style:italic;transform:scaleX(0.922);transform-origin:0 0;">メジャー ネーム</span></div>
<div class="a" style="left:208.00px;top:343.00px;"><span class="t" style="left:0.84px;top:-8.60px;font-size:10.6px;line-height:10.6px;color:#333333;transform:scaleX(1.010);transform-origin:0 0;">合計</span><span class="t" style="left:22.26px;top:-9.00px;font-size:10.8px;line-height:10.8px;color:#333333;transform:scaleX(1.0106);transform-origin:0 0;">(</span><span class="t" style="left:25.90px;top:-8.60px;font-size:10.6px;line-height:10.6px;color:#333333;transform:scaleX(1.010);transform-origin:0 0;">総質問数</span><span class="t" style="left:68.74px;top:-9.00px;font-size:10.8px;line-height:10.8px;color:#333333;transform:scaleX(1.0106);transform-origin:0 0;">)</span></div>
<div class="a" style="left:208.00px;top:372.00px;"><span class="t" style="left:0.83px;top:-8.60px;font-size:10.6px;line-height:10.6px;color:#333333;transform:scaleX(1.030);transform-origin:0 0;">合計</span><span class="t" style="left:22.67px;top:-9.00px;font-size:10.8px;line-height:10.8px;color:#333333;transform:scaleX(1.0303);transform-origin:0 0;">(Python Share)</span></div>
<div class="a" style="left:364.00px;top:18.00px;"><span class="t" style="left:0.56px;top:-9.45px;font-size:11.3px;line-height:11.3px;color:#333333;transform:scaleX(0.973);transform-origin:0 0;">列</span></div>
<div class="a" style="left:364.00px;top:48.00px;"><span class="t" style="left:0.54px;top:-9.80px;font-size:11.3px;line-height:11.3px;color:#333333;transform:scaleX(0.933);transform-origin:0 0;">行</span></div>
<div class="a" style="left:435.00px;top:18.00px;"><span class="t" style="left:0.30px;top:-9.00px;font-size:10.8px;line-height:10.8px;color:#ffffff;transform:scaleX(0.9135);transform-origin:0 0;">Trend Year</span></div>
<div class="a" style="left:434.00px;top:48.00px;"><span class="t" style="left:0.94px;top:-8.70px;font-size:10.6px;line-height:10.6px;color:#ffffff;transform:scaleX(1.001);transform-origin:0 0;">合計</span><span class="t" style="left:22.15px;top:-9.00px;font-size:10.8px;line-height:10.8px;color:#ffffff;">(</span><span class="t" style="left:25.75px;top:-8.70px;font-size:10.6px;line-height:10.6px;color:#ffffff;transform:scaleX(1.001);transform-origin:0 0;">総質問数</span><span class="t" style="left:68.18px;top:-9.00px;font-size:10.8px;line-height:10.8px;color:#ffffff;">)</span></div>
<div class="a" style="left:569.00px;top:48.00px;"><span class="t" style="left:0.94px;top:-8.70px;font-size:10.6px;line-height:10.6px;color:#ffffff;transform:scaleX(1.011);transform-origin:0 0;">合計</span><span class="t" style="left:22.37px;top:-9.00px;font-size:10.8px;line-height:10.8px;color:#ffffff;transform:scaleX(1.0110);transform-origin:0 0;">(Python Share)</span></div>
<div class="a" style="left:349.00px;top:91.00px;"><span class="t" style="left:0.20px;top:-15.70px;font-size:18.2px;line-height:18.2px;color:#2e2e2e;transform:scaleX(0.969);transform-origin:0 0;">トレンド分析</span><span class="t" style="left:111.28px;top:-14.00px;font-size:17.0px;line-height:17.0px;color:#2e2e2e;transform:scaleX(0.9687);transform-origin:0 0;">- </span><span class="t" style="left:121.34px;top:-15.70px;font-size:18.2px;line-height:18.2px;color:#2e2e2e;transform:scaleX(0.969);transform-origin:0 0;">ボリュームとシェア</span></div>
<div class="a" style="left:365.40px;top:494.70px;transform:rotate(-90deg);transform-origin:0 0;"><span class="t" style="left:0.00px;top:-9.00px;font-size:10.6px;line-height:10.6px;color:#4a4a4a;">総質問数</span></div>
<div class="a" style="left:20.00px;top:871.00px;"><span class="t" style="left:0.42px;top:-9.40px;font-size:11.3px;line-height:11.3px;color:#7a7a7a;transform:scaleX(0.918);transform-origin:0 0;">データ ソース</span></div>
<div class="a" style="left:119.00px;top:871.00px;"><span class="t" style="left:0.35px;top:-9.80px;font-size:11.3px;line-height:11.3px;color:#1a1a1a;font-weight:bold;transform:scaleX(0.946);transform-origin:0 0;">トレンド分析</span><span class="t" style="left:67.70px;top:-9.00px;font-size:10.8px;line-height:10.8px;color:#1a1a1a;font-weight:bold;transform:scaleX(0.9460);transform-origin:0 0;">- </span><span class="t" style="left:73.94px;top:-9.80px;font-size:11.3px;line-height:11.3px;color:#1a1a1a;font-weight:bold;transform:scaleX(0.946);transform-origin:0 0;">ボリュームとシ</span><span class="t" style="left:148.77px;top:-9.00px;font-size:10.8px;line-height:10.8px;color:#1a1a1a;font-weight:bold;transform:scaleX(0.9460);transform-origin:0 0;">...</span></div>
<div class="a" style="left:6.00px;top:895.00px;"><span class="t" style="left:0.30px;top:-9.00px;font-size:10.8px;line-height:10.8px;color:#444;transform:scaleX(0.7978);transform-origin:0 0;">18 </span><span class="t" style="left:12.28px;top:-9.60px;font-size:11.3px;line-height:11.3px;color:#444;transform:scaleX(0.798);transform-origin:0 0;">個のマーク</span></div>
<div class="a" style="left:73.00px;top:895.00px;"><span class="t" style="left:0.80px;top:-9.00px;font-size:10.8px;line-height:10.8px;color:#444;transform:scaleX(0.6961);transform-origin:0 0;">1 </span><span class="t" style="left:7.07px;top:-9.60px;font-size:11.3px;line-height:11.3px;color:#444;transform:scaleX(0.696);transform-origin:0 0;">行</span><span class="t" style="left:17.29px;top:-9.00px;font-size:10.8px;line-height:10.8px;color:#444;transform:scaleX(0.6961);transform-origin:0 0;">x 9 </span><span class="t" style="left:29.41px;top:-9.60px;font-size:11.3px;line-height:11.3px;color:#444;transform:scaleX(0.696);transform-origin:0 0;">列</span></div>
<div class="a" style="left:121.00px;top:895.00px;"><span class="t" style="left:0.48px;top:-9.60px;font-size:11.3px;line-height:11.3px;color:#444;transform:scaleX(0.838);transform-origin:0 0;">合計</span><span class="t" style="left:19.43px;top:-9.00px;font-size:10.8px;line-height:10.8px;color:#444;transform:scaleX(0.8385);transform-origin:0 0;">(</span><span class="t" style="left:22.44px;top:-9.60px;font-size:11.3px;line-height:11.3px;color:#444;transform:scaleX(0.838);transform-origin:0 0;">総質問数</span><span class="t" style="left:60.34px;top:-9.00px;font-size:10.8px;line-height:10.8px;color:#444;transform:scaleX(0.8385);transform-origin:0 0;">): 2,200,500</span></div>
</body></html>
